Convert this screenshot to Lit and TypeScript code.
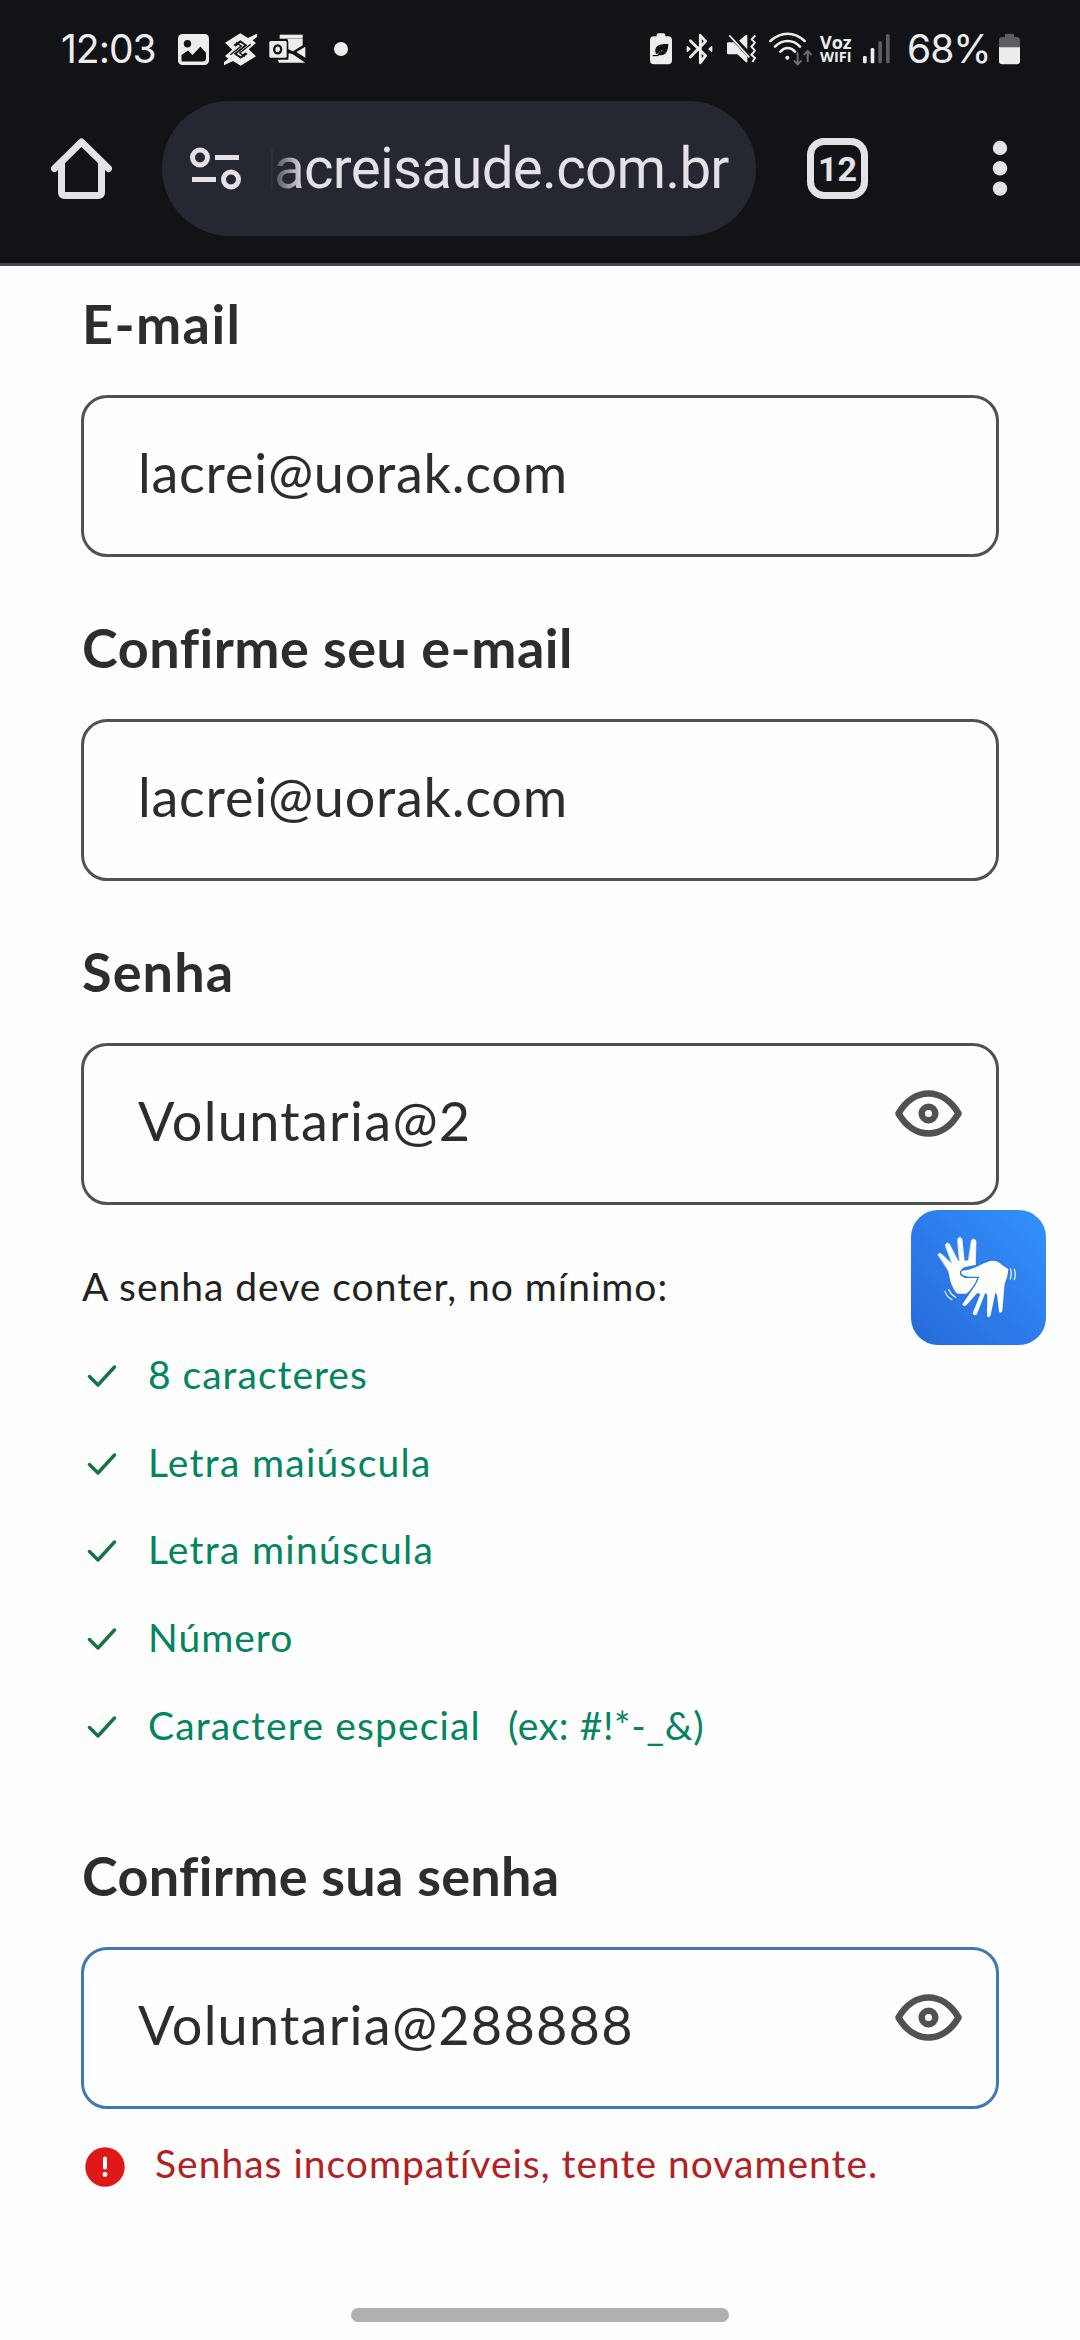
import { LitElement, html, svg, css } from "lit";
import { customElement, property } from "lit/decorators.js";
import { styleMap } from "lit/directives/style-map.js";

const tracking = (px: number) => styleMap({ letterSpacing: `${px}px` });

@customElement("status-bar")
class StatusBar extends LitElement {
  static styles = css`
    :host { display: flex; align-items: flex-start; justify-content: space-between; height: 101px; box-sizing: border-box; padding: 24px 60px 0 61px; color: #ededee; font-family: Roboto, sans-serif; }
    .group { display: flex; align-items: center; height: 50px; }
    .clock { font-family: Inter, sans-serif; font-size: 39px; line-height: 50px; width: 117px; letter-spacing: -1px; }
    .percent { font-family: Inter, sans-serif; font-size: 39px; line-height: 50px; width: 92px; letter-spacing: -1px; }
    .voz { display: flex; flex-direction: column; width: 43px; font-family: "Open Sans", sans-serif; font-weight: 700; }
    .voz span:first-child { font-size: 18px; line-height: 15px; }
    .voz span:last-child { font-size: 14.5px; line-height: 14px; }
    svg { display: block; flex: none; }
    .gallery { margin-right: 15px; }
    .bank { margin-right: 12px; }
    .mail { margin-right: 28px; }
    .leaf { margin-right: 14px; }
    .bt { margin-right: 14px; }
    .mute { margin-right: 11px; }
    .wifi { margin-right: 7px; }
    .signal { margin-right: 17px; }
  `;
  render() {
    return html`
      <div class="group">
        <span class="clock">12:03</span>
        <svg class="gallery" width="31" height="31" viewBox="0 0 31 31">
          <rect width="31" height="31" rx="4.5" fill="#ededee" />
          <circle cx="9.5" cy="9.8" r="3.7" fill="#111317" />
          <path d="M3.5 27V21L10 16.5L14.5 21L22.5 12.5L28 19V24Q28 27.5 25 27.5H6Q3.500 27.500 3.500 27Z" fill="#111317" />
        </svg>
        <svg class="bank" width="33" height="33" viewBox="0 0 99 99">
          <path d="M3 29L49 1L72 15L86 8L99 2V12L86 22L96 30L50 70L38 62L70 37L49 22L28 36L40 44L28 53Z" fill="#ededee" />
          <path d="M96 70L50 98L27 84L13 91L0 97V87L13 77L3 69L49 29L61 37L29 62L50 77L71 63L59 55L71 46Z" fill="#ededee" />
          <path d="M36 29L52 39L19 65M63 70L47 60L80 34" fill="none" stroke="#111317" stroke-width="4" />
        </svg>
        <svg class="mail" width="37" height="30" viewBox="0 0 111 90">
          <path d="M32 2H101V14H32Z" fill="#ededee" />
          <path d="M34 15H101V34L72 52L56 45V15Z" fill="#ededee" />
          <path d="M109 38V71L82 54ZM26 77H58V58L70 60L109 86H30Z" fill="#ededee" />
          <rect x="-2" y="17" width="60" height="58" rx="7" fill="#111317" />
          <rect x="1" y="21" width="52" height="50" rx="4" fill="#ededee" />
          <ellipse cx="26" cy="46" rx="10.500" ry="12" fill="none" stroke="#111317" stroke-width="7" />
        </svg>
        <svg width="14" height="14" viewBox="0 0 14 14"><circle cx="7" cy="7" r="7" fill="#ededee" /></svg>
      </div>
      <div class="group">
        <svg class="leaf" width="22" height="32" viewBox="0 0 66 96">
          <path d="M20 10V6Q20 1 25 1H41Q46 1 46 6V10H54Q66 10 66 22V82Q66 94 54 94H12Q0 94 0 82V22Q0 10 12 10Z" fill="#ededee" />
          <path d="M55 33C28 32 14 38 16 56Q17 62 21 64Q28 54 39 50Q30 58 26 66C44 70 54 60 55 33Z" fill="#111317" />
          <path d="M8 68L24 67L33 53" fill="none" stroke="#111317" stroke-width="4" />
        </svg>
        <svg class="bt" width="27" height="32" viewBox="0 0 81 96" fill="none" stroke="#ededee" stroke-width="8.500" stroke-linejoin="round" stroke-linecap="round">
          <path d="M13 23L59 68L43 89V7L59 25L13 72" />
          <path d="M4 41V55L12 48ZM77 41V55L69 48Z" fill="#ededee" stroke-width="4" />
        </svg>
        <svg class="mute" width="31" height="30" viewBox="0 0 93 90">
          <path d="M0 28Q0 25 4 25H20L61 68V84Q60 87 57 85L31 61H4Q0 61 0 57Z" fill="#ededee" />
          <path d="M36 20L56 3Q61 0 61 5V46Z" fill="#ededee" />
          <path d="M7 4L67 70" stroke="#ededee" stroke-width="5" />
          <path d="M85 4L74 16L84 26L73 38L84 50L73 62L84 72L76 84" fill="none" stroke="#ededee" stroke-width="6" stroke-linejoin="round" />
        </svg>
        <svg class="wifi" width="44" height="34" viewBox="0 0 132 102" fill="none" stroke="#ededee" stroke-width="7.500" stroke-linecap="round">
          <path d="M4 27Q28 5 56 5T107 27M18 44Q34 27 56 27T93 44M34 59Q44 48 56 48T78 59" />
          <circle cx="55" cy="77" r="6" fill="#ededee" stroke="none" />
          <path d="M86 64V96M76 87L86 97L96 87M116 88V58M106 67L116 57L126 67" stroke="#6c6d70" stroke-width="6" />
        </svg>
        <div class="voz"><span>Voz</span><span>WIFI</span></div>
        <svg class="signal" width="27" height="30" viewBox="0 0 81 90">
          <rect x="0" y="66" width="11" height="22" rx="4" fill="#ededee" />
          <rect x="23" y="42" width="11" height="46" rx="4" fill="#ededee" />
          <rect x="46" y="22" width="11" height="66" rx="4" fill="#5c5d60" />
          <rect x="69" y="1" width="11" height="87" rx="4" fill="#5c5d60" />
        </svg>
        <span class="percent">68%</span>
        <svg width="21" height="32" viewBox="0 0 63 96">
          <path d="M18 12V6Q18 2 22 2H41Q45 2 45 6V12H53Q63 12 63 22V44H0V22Q0 12 10 12Z" fill="#5c5d60" />
          <path d="M0 43H63V84Q63 94 53 94H10Q0 94 0 84Z" fill="#ededee" />
        </svg>
      </div>
    `;
  }
}

@customElement("browser-toolbar")
class BrowserToolbar extends LitElement {
  static styles = css`
    :host { display: flex; align-items: center; height: 135px; padding: 0 72px 27px 51px; color: #e4e2e9; font-family: Roboto, sans-serif; }
    svg { display: block; flex: none; }
    .pill { display: flex; align-items: center; box-sizing: border-box; width: 594px; height: 135px; margin: 0 51px 0 50px; padding-left: 28px; border-radius: 68px; background: #252830; }
    .rule { width: 2px; height: 43px; margin: 0 1px 0 30px; background: #2d3039; }
    .url { font-size: 56.500px; line-height: 70px; letter-spacing: -0.75px; white-space: nowrap; background: linear-gradient(90deg, #4b4d55 0, #e4e2e9 30px); -webkit-background-clip: text; background-clip: text; color: transparent; }
    .tabs { display: flex; align-items: center; justify-content: center; box-sizing: border-box; width: 61px; height: 61px; margin-right: auto; border: 7px solid #e4e2e9; border-radius: 17px; font-size: 34px; font-weight: 700; line-height: 44px; }
  `;
  render() {
    return html`
      <svg width="61" height="61" viewBox="0 0 61 61" fill="none" stroke="#e4e2e9" stroke-width="7" stroke-linejoin="round" stroke-linecap="round">
        <path d="M3.500 30.500L30.500 4L57.500 30.500" />
        <path d="M10.500 26V54Q10.500 57.500 14 57.500H47Q50.500 57.500 50.500 54V26" />
      </svg>
      <div class="pill">
        <svg width="51" height="43" viewBox="0 0 51 43" fill="none" stroke="#e4e2e9" stroke-width="5">
          <circle cx="10" cy="10.500" r="7.500" /><circle cx="41" cy="32.500" r="7.500" />
          <path d="M25 10.500H49M2 32.500H26" />
        </svg>
        <span class="rule"></span>
        <span class="url">acreisaude.com.br</span>
      </div>
      <div class="tabs">12</div>
      <svg width="16" height="57" viewBox="0 0 16 57" fill="#e4e2e9">
        <circle cx="8" cy="8" r="7.200" /><circle cx="8" cy="28.300" r="7.200" /><circle cx="8" cy="48.600" r="7.200" />
      </svg>
    `;
  }
}

@customElement("form-field")
class FormField extends LitElement {
  @property() label = "";
  @property() value = "";
  @property({ type: Number }) labelTracking = 0;
  @property({ type: Number }) valueTracking = 0;
  @property({ type: Boolean }) secret = false;
  @property({ type: Boolean, reflect: true }) active = false;
  static styles = css`
    :host { display: flex; flex-direction: column; gap: 36px; color: #2d2d2d; font-family: Lato, sans-serif; }
    .label { padding-left: 1px; font-size: 54px; font-weight: 700; line-height: 74px; margin-bottom: -2px; white-space: nowrap; }
    .box { display: flex; justify-content: space-between; box-sizing: border-box; height: 162px; padding: 36px 34px 0 54px; border: 3px solid #515151; border-radius: 26px; background: #fefefe; }
    :host([active]) .box { border-color: #3f78b5; }
    .value { font-size: 54px; line-height: 77px; white-space: nowrap; }
    .eye { display: block; margin-top: 8px; }
  `;
  render() {
    return html`
      <span class="label" style=${tracking(this.labelTracking)}>${this.label}</span>
      <div class="box">
        <span class="value" style=${tracking(this.valueTracking)}>${this.value}</span>
        ${this.secret
          ? html`<svg class="eye" width="67" height="47" viewBox="0 0 67 47" fill="none" stroke="#515151" stroke-width="6.500" stroke-linejoin="round">
              <path d="M3.500 23.500C19 -3.200 48 -3.200 63.500 23.500C48 50.200 19 50.200 3.500 23.500Z" />
              <circle cx="33.500" cy="23.500" r="6.800" />
            </svg>`
          : null}
      </div>
    `;
  }
}

@customElement("sign-button")
class SignButton extends LitElement {
  static styles = css`
    :host { display: block; width: 135px; height: 135px; border-radius: 27px; background: linear-gradient(45deg, #256ad8 0%, #2e7fee 55%, #3491fb 100%); }
    svg { display: block; }
  `;
  render() {
    return html`
      <svg width="135" height="135" viewBox="153 540 405 405" fill="none" stroke-linecap="round" stroke-linejoin="round">
        <path d="M262 712L288 694L346 690V704L312 712Q300 718 301 734L315 745L356 740L348 764L319 791H292Q280 780 272 756Z" fill="#fff" />
        <path d="M234 673Q238 667 245 673L276 702L266 722ZM256 644Q261 635 268 642L300 704L280 710ZM293 628Q299 616 306 627L314 705L300 706ZM335 630Q342 623 348 632L346 704L324 704Z" fill="#fff" stroke="#fff" stroke-width="2" />
        <path d="M307 722C335 721 350 708 382 696Q408 686 425 704L445 717Q444 740 434 762L427 842Q424 852 417 845L411 794L406 788L392 856Q387 867 381 858L382 795L376 788L351 852Q344 861 338 850L361 792L352 789L319 826Q311 832 307 823L348 763L358 740H325Q302 738 304 726Z" fill="#fff" stroke="#2b78e5" stroke-width="8" paint-order="stroke" />
        <g stroke="#fff" stroke-width="3.500">
          <path d="M451 716Q457 731 451 747M463 718Q469 734 463 749" />
          <path d="M266 779Q273 794 287 802M255 784Q261 801 276 809" />
        </g>
      </svg>
    `;
  }
}

interface Part { text: string; spacing: number; }

@customElement("app-root")
class AppRoot extends LitElement {
  private rules: Part[][] = [
    [{ text: "8 caracteres", spacing: 1 }],
    [{ text: "Letra maiúscula", spacing: 1.27 }],
    [{ text: "Letra minúscula", spacing: 1.27 }],
    [{ text: "Número", spacing: 1 }],
    [{ text: "Caractere especial", spacing: 1.15 }, { text: "(ex: #!*-_&)", spacing: 0.6 }],
  ];
  static styles = css`
    :host { display: block; position: relative; width: 1080px; height: 2340px; overflow: hidden; background: #fefefe; font-family: Lato, sans-serif; }
    .chrome { box-sizing: border-box; height: 266px; background: #111317; border-bottom: 3px solid #47464f; }
    .page { display: flex; flex-direction: column; gap: 54px; padding: 21px 81px 0; }
    .rules { display: flex; flex-direction: column; gap: 39.750px; margin: 3px 0 36.500px; font-size: 39px; line-height: 48px; color: #222; white-space: nowrap; }
    .intro { padding-left: 1px; letter-spacing: 0.98px; }
    .rule { display: flex; align-items: center; color: #048460; }
    .rule svg { display: block; margin: 4px 31px 0 6px; }
    .rule span { margin-right: 27px; }
    .error { display: flex; align-items: center; gap: 30px; margin-top: -24px; padding-left: 4px; font-size: 39px; line-height: 48px; letter-spacing: 1px; color: #b12121; white-space: nowrap; }
    .error svg { display: block; margin-top: 8px; }
    .helper { position: absolute; left: 911px; top: 1210px; }
    .handle { position: absolute; left: 351px; top: 2308px; width: 378px; height: 14px; border-radius: 7px; background: #b0b0b0; }
  `;
  render() {
    return html`
      <header class="chrome"><status-bar></status-bar><browser-toolbar></browser-toolbar></header>
      <main class="page">
        <form-field label="E-mail" value="lacrei@uorak.com" .labelTracking=${1.4} .valueTracking=${0.75}></form-field>
        <form-field label="Confirme seu e-mail" value="lacrei@uorak.com" .labelTracking=${0.5} .valueTracking=${0.75}></form-field>
        <form-field label="Senha" value="Voluntaria@2" .labelTracking=${1.1} .valueTracking=${1.3} secret></form-field>
        <div class="rules">
          <div class="intro">A senha deve conter, no mínimo:</div>
          ${this.rules.map(
            (parts) => html`<div class="rule">
              <svg width="30" height="22" viewBox="0 0 30 22" fill="none" stroke="#14753f" stroke-width="3.400" stroke-linecap="round" stroke-linejoin="round">${svg`<path d="M2.500 11.500L11 20L27.500 2" />`}</svg>
              ${parts.map((part) => html`<span style=${tracking(part.spacing)}>${part.text}</span>`)}
            </div>`
          )}
        </div>
        <form-field label="Confirme sua senha" value="Voluntaria@288888" .labelTracking=${0.3} .valueTracking=${1.25} secret active></form-field>
        <div class="error">
          <svg width="40" height="40" viewBox="0 0 40 40">
            <circle cx="20" cy="20" r="19.700" fill="#df1818" />
            <path d="M20 11.500V20.500" stroke="#fff" stroke-width="4" stroke-linecap="round" />
            <circle cx="20" cy="27.500" r="2.400" fill="#fff" />
          </svg>
          <span>Senhas incompatíveis, tente novamente.</span>
        </div>
      </main>
      <sign-button class="helper"></sign-button>
      <div class="handle"></div>
    `;
  }
}
